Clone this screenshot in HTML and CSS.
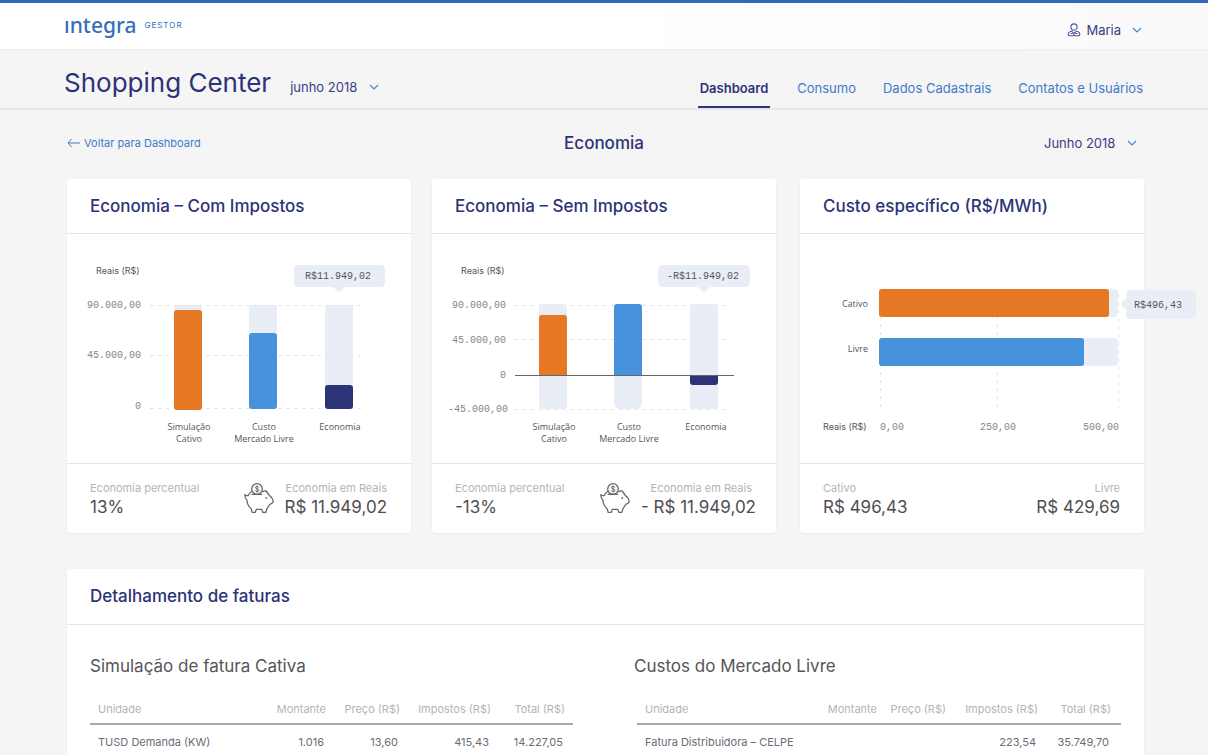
FILE: index.html
```html
<!DOCTYPE html>
<html lang="pt-BR">
<head>
<meta charset="utf-8">
<meta name="viewport" content="width=device-width, initial-scale=1">
<title>Integra Gestor – Economia</title>
<link rel="stylesheet" href="styles.css">
</head>
<body>
<svg class="defs" width="0" height="0" aria-hidden="true">
  <symbol id="chevron" viewBox="0 0 10 10"><path d="M1 3l4 4 4-4" fill="none" stroke="#4a86cc" stroke-width="1.2"/></symbol>
  <symbol id="pig" viewBox="0 0 30 31">
    <g fill="none" stroke="#66666e" stroke-width="1.300" stroke-linejoin="round" stroke-linecap="round">
      <circle cx="13" cy="6" r="5.3"/>
      <path d="M8.2 11.4h9.4"/>
      <path d="M7.6 8.6C6 9.8 4.900 11 4.200 12.600c-1.400.2-2.500 0-3.400-.8 0 2.600.7 4.200 2.100 5.200.3 4.200 2 7 4.300 8.700l.9 3.700h3.200l1-3h5.500l1 3h3.100l1.100-3.900c1.300-1.500 2.200-2.900 2.900-4.200 1.700-.6 2.800-1.500 3.300-2.500-.3-2.700-1.600-4.800-3.800-6.300l-3.300-4.500c-1.300-.2-2.400 0-3.200.7"/>
    </g>
    <circle cx="22.300" cy="15" r=".9" fill="#66666e"/>
    <path d="M14.900 4.500c-.5-1.500-3.600-1.400-3.600 0 0 1.900 3.700.9 3.700 2.900 0 1.500-3.200 1.600-3.800 0M13.100 2.500v7" fill="none" stroke="#66666e" stroke-width="1"/>
  </symbol>
</svg>

<header class="topbar">
  <a class="brand" href="#"><span class="brand-name">ıntegra</span><span class="brand-tag">GESTOR</span></a>
  <button class="user" type="button">
    <svg width="14" height="14" viewBox="0 0 14 14" fill="none" stroke="#50549a" stroke-width="1.100" stroke-linejoin="round" aria-hidden="true">
      <circle cx="7" cy="4" r="3.100"/>
      <path d="M4.700 8.200C2.400 8.500 1.200 9.700 1.200 11.400c0 .9.5 1.400 1.400 1.400h8.800c.9 0 1.400-.5 1.400-1.400 0-1.700-1.200-2.900-3.500-3.200M4.500 8.200L7 10.400l2.500-2.200M3.600 10.500h2.200M8.200 10.500h2.200M7 10.400v2"/>
    </svg>
    <span>Maria</span>
    <svg class="chev" aria-hidden="true"><use href="#chevron"/></svg>
  </button>
</header>

<div class="subbar">
  <div class="place">
    <h1>Shopping Center</h1>
    <span class="pick">
      <select aria-label="Mês da unidade"><option>junho 2018</option></select>
      <svg class="chev" aria-hidden="true"><use href="#chevron"/></svg>
    </span>
  </div>
  <nav class="tabs">
    <a class="active" href="#">Dashboard</a>
    <a href="#">Consumo</a>
    <a href="#">Dados Cadastrais</a>
    <a href="#">Contatos e Usuários</a>
  </nav>
</div>

<main>
  <div class="heading">
    <a class="back" href="#"><svg width="13" height="10" viewBox="0 0 13 10" aria-hidden="true"><path d="M13 5H1M4.500 1L1 5l3.500 4" fill="none" stroke="#3f7bc8"/></svg>Voltar para Dashboard</a>
    <h2>Economia</h2>
    <span class="pick">
      <select aria-label="Mês"><option>Junho 2018</option></select>
      <svg class="chev" aria-hidden="true"><use href="#chevron"/></svg>
    </span>
  </div>

  <div class="cards">
    <section class="card">
      <h3>Economia – Com Impostos</h3>
      <svg class="chart" viewBox="0 0 344 229" role="img" aria-label="Economia com impostos">
        <g class="track"><rect x="107" y="71" width="28" height="104" rx="3"/><rect x="182" y="71" width="28" height="104" rx="3"/><rect x="258" y="71" width="28" height="104" rx="3"/></g>
        <path class="grid" d="M83 71.500h215M83 121.500h215M83 174.500h215"/>
        <rect class="track" x="182" y="72" width="28" height="102"/><rect class="track" x="258" y="72" width="28" height="102"/>
        <rect class="orange" x="107" y="76" width="28" height="100" rx="3"/>
        <rect class="blue" x="182" y="99" width="28" height="76" rx="3"/>
        <rect class="navy" x="258" y="151" width="28" height="24" rx="3"/>
        <path class="track" d="M231 31h83a4 4 0 0 1 4 4v14a4 4 0 0 1-4 4h-36l-4 4q-2 2-4 0l-4-4h-35a4 4 0 0 1-4-4v-14a4 4 0 0 1 4-4z"/>
        <text class="unit" x="29" y="40">Reais (R$)</text>
        <g class="tick end"><text x="74" y="74">90.000,00</text><text x="74" y="124">45.000,00</text><text x="74" y="175">0</text></g>
        <text class="tip mid" x="271" y="45">R$11.949,02</text>
        <g class="label mid"><text x="122" y="196">Simulação</text><text x="122" y="208">Cativo</text><text x="197" y="196">Custo</text><text x="197" y="208">Mercado Livre</text><text x="273" y="196">Economia</text></g>
      </svg>
      <footer>
        <div class="stat"><span>Economia percentual</span><strong>13%</strong></div>
        <div class="saving">
          <svg width="30" height="31" aria-hidden="true"><use href="#pig"/></svg>
          <div class="stat right"><span>Economia em Reais</span><strong>R$ 11.949,02</strong></div>
        </div>
      </footer>
    </section>

    <section class="card">
      <h3>Economia – Sem Impostos</h3>
      <svg class="chart" viewBox="0 0 344 229" role="img" aria-label="Economia sem impostos">
        <path class="grid" d="M83 71.500h215M83 105.500h215M83 175.500h215"/>
        <g class="track"><rect x="107" y="70" width="28" height="105" rx="4"/><rect x="182" y="70" width="28" height="105" rx="6"/><rect x="258" y="70" width="28" height="105" rx="3"/></g>
        <path class="orange" d="M107 141V84a3 3 0 0 1 3-3h22a3 3 0 0 1 3 3v57z"/>
        <path class="blue" d="M182 141V73a3 3 0 0 1 3-3h22a3 3 0 0 1 3 3v68z"/>
        <path class="navy" d="M258 141h28v7a3 3 0 0 1-3 3h-22a3 3 0 0 1-3-3z"/>
        <path class="zero" d="M83 141.500h219"/>
        <path class="track" d="M230 31h84a4 4 0 0 1 4 4v14a4 4 0 0 1-4 4h-36l-4 4q-2 2-4 0l-4-4h-36a4 4 0 0 1-4-4v-14a4 4 0 0 1 4-4z"/>
        <text class="unit" x="29" y="40">Reais (R$)</text>
        <g class="tick end"><text x="74" y="74">90.000,00</text><text x="74" y="109">45.000,00</text><text x="74" y="144">0</text><text x="76" y="178">-45.000,00</text></g>
        <text class="tip mid" x="271" y="45">-R$11.949,02</text>
        <g class="label mid"><text x="122" y="196">Simulação</text><text x="122" y="208">Cativo</text><text x="197" y="196">Custo</text><text x="197" y="208">Mercado Livre</text><text x="274" y="196">Economia</text></g>
      </svg>
      <footer class="wide">
        <div class="stat"><span>Economia percentual</span><strong>-13%</strong></div>
        <div class="saving">
          <svg width="30" height="31" aria-hidden="true"><use href="#pig"/></svg>
          <div class="stat right"><span>Economia em Reais</span><strong>- R$ 11.949,02</strong></div>
        </div>
      </footer>
    </section>

    <section class="card">
      <h3>Custo específico (R$/MWh)</h3>
      <svg class="chart" viewBox="0 0 344 229" role="img" aria-label="Custo específico">
        <path class="grid" d="M80.500 58v120M197.500 58v120"/>
        <g class="track"><rect x="79" y="55" width="239" height="28" rx="4"/><rect x="79" y="104" width="239" height="28" rx="4"/></g>
        <path class="grid" d="M318.500 60v118"/>
        <rect class="orange" x="79" y="55" width="230" height="28" rx="3"/>
        <rect class="blue" x="79" y="104" width="205" height="28" rx="3"/>
        <path class="track" d="M330 56h62a4 4 0 0 1 4 4v21a4 4 0 0 1-4 4h-62a4 4 0 0 1-4-4v-6l-4-3q-2-2 0-4l4-3v-5a4 4 0 0 1 4-4z"/>
        <g class="label end"><text x="68" y="73">Cativo</text><text x="68" y="118">Livre</text></g>
        <text class="tip" x="334" y="74">R$496,43</text>
        <text class="unit" x="23" y="196">Reais (R$)</text>
        <g class="tick"><text x="80" y="196">0,00</text><text class="mid" x="198" y="196">250,00</text><text class="end" x="319" y="196">500,00</text></g>
      </svg>
      <footer>
        <div class="stat"><span>Cativo</span><strong>R$ 496,43</strong></div>
        <div class="stat right"><span>Livre</span><strong>R$ 429,69</strong></div>
      </footer>
    </section>
  </div>

  <section class="card invoices">
    <h3>Detalhamento de faturas</h3>
    <div class="columns">
      <div class="invoice">
        <h4>Simulação de fatura Cativa</h4>
        <table>
          <colgroup><col><col class="c-amount"><col class="c-price"><col class="c-tax"><col class="c-total"></colgroup>
          <thead><tr><th>Unidade</th><th>Montante</th><th>Preço (R$)</th><th>Impostos (R$)</th><th>Total (R$)</th></tr></thead>
          <tbody><tr><td>TUSD Demanda (KW)</td><td>1.016</td><td>13,60</td><td>415,43</td><td>14.227,05</td></tr></tbody>
        </table>
      </div>
      <div class="invoice market">
        <h4>Custos do Mercado Livre</h4>
        <table>
          <colgroup><col><col class="c-amount"><col class="c-price"><col class="c-tax"><col class="c-total"></colgroup>
          <thead><tr><th>Unidade</th><th>Montante</th><th>Preço (R$)</th><th>Impostos (R$)</th><th>Total (R$)</th></tr></thead>
          <tbody><tr><td>Fatura Distribuidora – CELPE</td><td></td><td></td><td>223,54</td><td>35.749,70</td></tr></tbody>
        </table>
      </div>
    </div>
  </section>
</main>
</body>
</html>
```
FILE: styles.css
```css
* { box-sizing: border-box; }
html { overflow: hidden auto; scrollbar-width: none; }
body {
  margin: 0;
  background: #f5f5f6;
  color: #2c3376;
  font-family: Inter, "Liberation Sans", sans-serif;
  font-size: 13px;
  line-height: 16px;
}
a { color: #3f7bc8; text-decoration: none; }
h1, h2, h3, h4 { margin: 0; font-weight: 400; }
button, select { font: inherit; color: #3b3f80; background: none; border: 0; padding: 0; margin: 0; }
.defs { position: absolute; }
.chev { width: 10px; height: 10px; }

.topbar {
  display: flex;
  justify-content: space-between;
  align-items: center;
  height: 51px;
  padding: 0 66px 0 64px;
  border-top: 3px solid #2f69b8;
  border-bottom: 2px solid #eceff7;
  background: linear-gradient(90deg, #fff 50%, #f9f9fa);
}
.brand { display: flex; align-items: center; gap: 8px; padding-bottom: 2px; color: #3470bb; }
.brand-name { font: 500 21px/26px "Noto Sans", sans-serif; }
.brand-tag { font-size: 8px; letter-spacing: 1px; }
.user { display: flex; align-items: center; gap: 5px; padding-top: 8px; }
.user .chev { margin-left: 6px; }

.subbar {
  display: flex;
  justify-content: space-between;
  align-items: stretch;
  height: 59px;
  padding: 0 65px 0 64px;
  border-bottom: 2px solid #e6e6e9;
}
.place { display: flex; align-items: baseline; gap: 19px; padding-top: 15px; }
h1 { font-size: 26px; line-height: 34px; }
.pick { display: inline-flex; align-items: center; }
.pick select { appearance: none; padding-right: 21px; cursor: pointer; }
.pick .chev { margin-left: -10px; pointer-events: none; }
.tabs { display: flex; gap: 27px; }
.tabs a { padding: 29px 0 0; }
.tabs .active {
  color: #2c3376;
  font-weight: 600;
  padding: 29px 2px 0;
  border-bottom: 2px solid #2c3376;
}

main { padding: 0 64px 48px 67px; }
.heading {
  display: grid;
  grid-template-columns: 1fr auto 1fr;
  align-items: center;
  height: 69px;
  padding: 0 3px 4px 0;
}
.heading .pick { justify-self: end; margin-right: 4px; }
.back { display: flex; align-items: center; gap: 4px; font-size: 11px; }
h2 { font-size: 17px; line-height: 20px; font-weight: 500; }

.cards { display: flex; }
.cards .card { flex: 1; min-width: 0; }
.cards .card:nth-child(2) { margin: 0 24px 0 21px; }
.card {
  background: #fff;
  border-radius: 4px;
  box-shadow: 0 1px 3px #e9ecf5;
}
h3 {
  padding: 16px 23px;
  border-bottom: 1px solid #e4e4e7;
  font-size: 17px;
  line-height: 22px;
  font-weight: 500;
}
.chart { display: block; width: 100%; overflow: visible; }
.track { fill: #e9edf6; }
.orange { fill: #e67824; }
.blue { fill: #4891dc; }
.navy { fill: #2c3376; }
.grid { stroke: #e2e2e5; stroke-dasharray: 3 5; }
.zero { stroke: #66666a; }
.chart text { font-size: 9px; fill: #55555a; }
.chart .tick text { font-family: "Liberation Mono", monospace; font-size: 10px; fill: #85858c; }
.chart .tip { font-family: "Liberation Mono", monospace; font-size: 10px; }
.chart .label text { font-family: "Open Sans", sans-serif; }
.chart .mid { text-anchor: middle; }
.chart .end { text-anchor: end; }

.card footer {
  display: flex;
  justify-content: space-between;
  align-items: center;
  height: 70px;
  padding: 0 24px 0 23px;
  border-top: 1px solid #e4e4e7;
}
.stat { display: flex; flex-direction: column; }
.stat span { font-size: 11px; line-height: 16px; color: #b4b4b8; }
.stat strong { font-size: 17px; line-height: 22px; font-weight: 400; color: #4e4e52; }
.right { text-align: right; }
.saving { display: flex; align-items: center; gap: 11px; }
.card .wide { padding-right: 20px; }
.wide .right span { padding-right: 4px; }

.invoices { margin-top: 36px; }
.invoices h3 { padding-bottom: 17px; }
.columns { display: grid; grid-template-columns: 483fr 487fr; gap: 61px; padding: 30px 23px; }
h4 { font-size: 17px; line-height: 22px; color: #55555a; }
table { width: 100%; margin-top: 20px; border-collapse: collapse; table-layout: fixed; font-size: 11px; color: #6b6b75; }
th, td { padding: 4px 0; text-align: right; white-space: nowrap; }
th:first-child, td:first-child { padding-left: 8px; text-align: left; }
th { font-weight: 400; color: #b4b4b8; padding-bottom: 6px; border-bottom: 2px solid #a9a9b0; }
td { padding: 9px 2px 6px 0; }
th:last-child { padding-right: 8px; }
td:last-child { padding-right: 10px; }
.c-amount { width: 60px; }
.c-price { width: 74px; }
.c-tax { width: 91px; }
.c-total { width: 82px; }
.market table { width: calc(100% - 3px); margin-left: 3px; }
.market th:last-child { padding-right: 10px; }
.market td:last-child { padding-right: 12px; }
.market .c-price { width: 69px; }
.market .c-tax { width: 92px; }
.market .c-total { width: 83px; }
```
